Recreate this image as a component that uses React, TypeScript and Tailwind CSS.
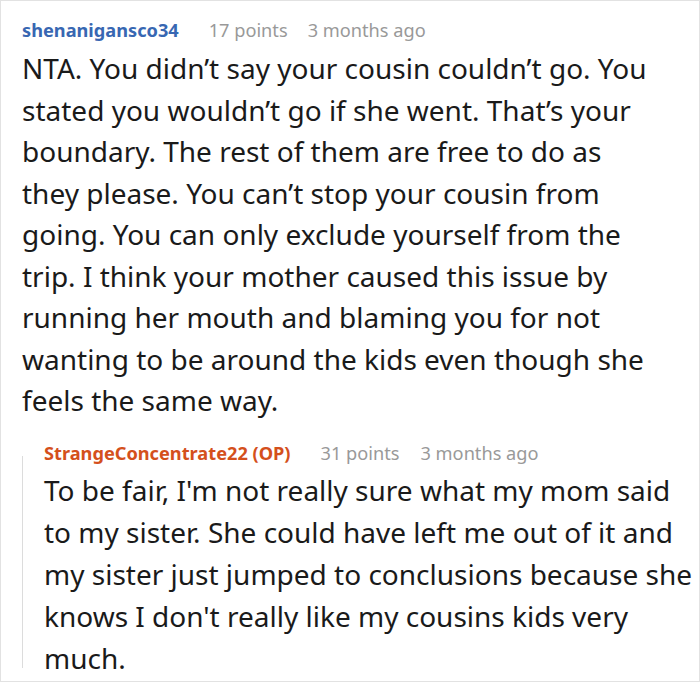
export default function App() {
  return (
    <div
      className="w-[700px] h-[682px] border border-[#e2e2e2] bg-white pl-[21px] pt-[16px] text-[#1a1a1a]"
      style={{ fontFamily: '"Noto Sans", "Open Sans", sans-serif' }}
    >
      {/* Parent comment */}
      <div className="flex items-baseline h-[26px] text-[18.2px] leading-[26px]">
        <span className="font-bold text-[#3867b2]">shenanigansco34</span>
        <span className="ml-[30px] text-[#999999]">17 points</span>
        <span className="ml-[20px] text-[#999999]">3 months ago</span>
      </div>
      <p className="mt-[5px] pr-[44px] text-[28px] leading-[41.5px]">
        NTA. You didn’t say your cousin couldn’t go. You stated you wouldn’t go
        if she went. That’s your boundary. The rest of them are free to do as
        they please. You can’t stop your cousin from going. You can only exclude
        yourself from the trip. I think your mother caused this issue by running
        her mouth and blaming you for not wanting to be around the kids even
        though she feels the same way.
      </p>

      {/* Reply */}
      <div className="mt-[34px] flex flex-col border-l border-[#dcdcdc] pl-[21px]">
        <div className="-mt-[16px] flex items-baseline h-[26px] text-[18.2px] leading-[26px]">
          <span className="font-bold text-[#d4501c]">StrangeConcentrate22 (OP)</span>
          <span className="ml-[30px] text-[#999999]">31 points</span>
          <span className="ml-[21px] text-[#999999]">3 months ago</span>
        </div>
        <p className="mt-[3px] -mb-[11px] text-[28px] leading-[42px]">
          To be fair, I'm not really sure what my mom said to my sister. She
          could have left me out of it and my sister just jumped to conclusions
          because she knows I don't really like my cousins kids very much.
        </p>
      </div>
    </div>
  );
}
